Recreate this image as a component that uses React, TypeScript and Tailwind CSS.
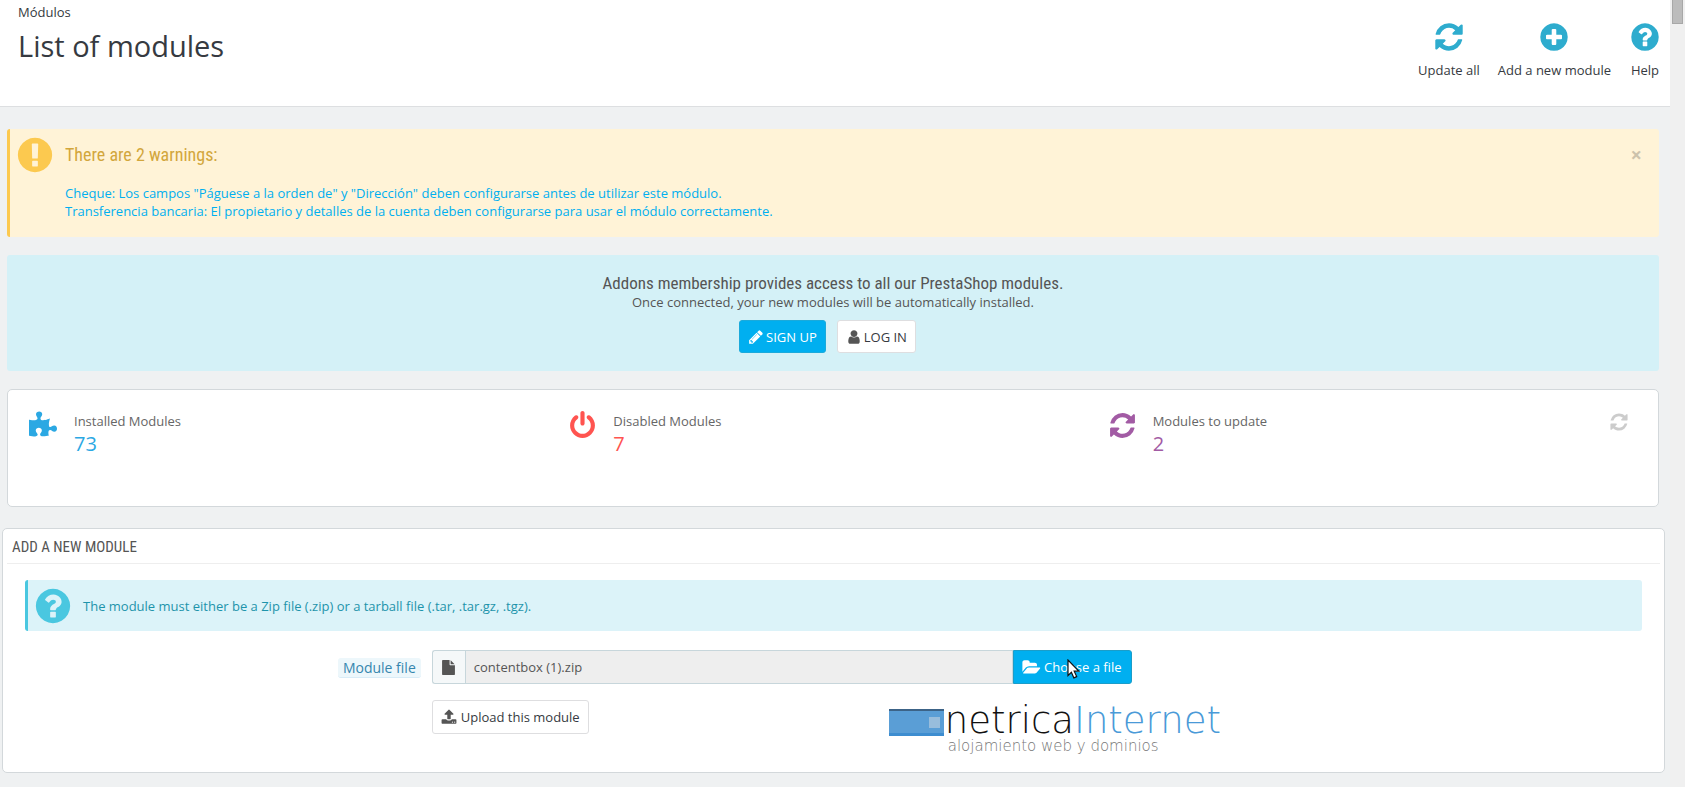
import type { ReactNode } from 'react'
import { FaPuzzlePiece } from 'react-icons/fa'

const circle =
  'q0 209-103 385.5t-279.5 279.5-385.5 103-385.5-103-279.5-279.5-103-385.5 103-385.5 279.5-279.5 385.5-103 385.5 103 279.5 279.5 103 385.5z'

const paths = {
  refresh:
    'M1639 1056q0 5-1 7-64 268-268 434.5t-478 166.5q-146 0-282.5-55t-243.5-157l-129 129q-19 19-45 19t-45-19-19-45v-448q0-26 19-45t45-19h448q26 0 45 19t19 45-19 45l-137 137q71 66 161 102t187 36q134 0 250-65t186-179q11-17 53-117 8-23 30-23h192q13 0 22.5 9.5t9.5 22.5zm25-800v448q0 26-19 45t-45 19h-448q-26 0-45-19t-19-45 19-45l138-138q-148-137-349-137-134 0-250 65t-186 179q-11 17-53 117-8 23-30 23h-199q-13 0-22.5-9.5t-9.5-22.5v-7q65-268 270-434.5t480-166.5q146 0 284 55.5t245 156.5l130-129q19-19 45-19t45 19 19 45z',
  plus:
    'M1344 960v-128q0-26-19-45t-45-19h-256v-256q0-26-19-45t-45-19h-128q-26 0-45 19t-19 45v256h-256q-26 0-45 19t-19 45v128q0 26 19 45t45 19h256v256q0 26 19 45t45 19h128q26 0 45-19t19-45v-256h256q26 0 45-19t19-45zm320-64' + circle,
  question:
    'M1024 1376v-192q0-14-9-23t-23-9h-192q-14 0-23 9t-9 23v192q0 14 9 23t23 9h192q14 0 23-9t9-23zm256-672q0-88-55.5-163t-138.5-116-170-41q-243 0-371 213-15 24 8 42l132 100q7 6 19 6 16 0 25-12 53-68 86-92 34-24 86-24 48 0 85.5 26t37.5 59q0 38-20 61t-68 45q-63 28-115.5 86.5t-52.5 125.5v36q0 14 9 23t23 9h192q14 0 23-9t9-23q0-19 21.5-49.5t54.5-49.5q32-18 49-28.5t46-35 44.5-48 28-60.5 12.5-81zm384 192' + circle,
  exclamation:
    'M896 128q209 0 385.5 103t279.5 279.5 103 385.5-103 385.5-279.5 279.5-385.5 103-385.5-103-279.5-279.5-103-385.5 103-385.5 279.5-279.5 385.5-103zm128 1247v-190q0-14-9-23.5t-22-9.5h-192q-13 0-23 10t-10 23v190q0 13 10 23t23 10h192q13 0 22-9.5t9-23.5zm-2-344l18-621q0-12-10-18-10-8-24-8h-220q-14 0-24 8-10 6-10 18l17 621q0 10 10 17.5t24 7.5h185q14 0 23.5-7.5t10.5-17.5z',
  power:
    'M1664 896q0 156-61 298t-164 245-245 164-298 61-298-61-245-164-164-245-61-298q0-182 80.5-343t226.5-270q43-32 95.5-25t83.5 50q32 42 24.5 94.5t-49.5 84.5q-98 74-151.5 181t-53.5 228q0 104 40.5 198.5t109.5 163.5 163.5 109.5 198.5 40.5 198.5-40.5 163.5-109.5 109.5-163.5 40.5-198.5q0-121-53.5-228t-151.5-181q-42-32-49.5-84.5t24.5-94.5q31-43 84-50t95 25q146 109 226.5 270t80.5 343zm-640-768v640q0 52-38 90t-90 38-90-38-38-90v-640q0-52 38-90t90-38 90 38 38 90z',
  pencil:
    'M491 1536l91-91-235-235-91 91v107h128v128h107zm523-928q0-22-22-22-10 0-17 7l-542 542q-7 7-7 17 0 22 22 22 10 0 17-7l542-542q7-7 7-17zm-54-192l416 416-832 832h-416v-416zm683 96q0 53-37 90l-166 166-416-416 166-165q36-38 90-38 53 0 91 38l235 234q37 39 37 91z',
  user:
    'M1536 1399q0 109-62.5 187t-150.5 78h-854q-88 0-150.5-78t-62.5-187q0-85 8.5-160.5t31.5-152 58.5-131 94-89 134.5-34.5q131 128 313 128t313-128q76 0 134.5 34.5t94 89 58.5 131 31.5 152 8.5 160.5zm-256-887q0 159-112.5 271.5t-271.5 112.5-271.5-112.5-112.5-271.5 112.5-271.5 271.5-112.5 271.5 112.5 112.5 271.5z',
  upload:
    'M1344 1472q0-26-19-45t-45-19-45 19-19 45 19 45 45 19 45-19 19-45zm256 0q0-26-19-45t-45-19-45 19-19 45 19 45 45 19 45-19 19-45zm128-224v320q0 40-28 68t-68 28h-1472q-40 0-68-28t-28-68v-320q0-40 28-68t68-28h427q21 56 70.5 92t110.5 36h256q61 0 110.5-36t70.5-92h427q40 0 68 28t28 68zm-325-648q-17 40-59 40h-256v448q0 26-19 45t-45 19h-256q-26 0-45-19t-19-45v-448h-256q-42 0-59-40-17-39 14-69l448-448q18-19 45-19t45 19l448 448q31 30 14 69z',
  file:
    'M1152 512v-472q22 14 36 28l408 408q14 14 28 36h-472zm-128 32q0 40 28 68t68 28h544v1056q0 40-28 68t-68 28h-1344q-40 0-68-28t-28-68v-1600q0-40 28-68t68-28h800v544z',
  folder:
    'M1815 952q0 31-31 66l-336 396q-43 51-120.5 86.5t-143.5 35.5h-1088q-34 0-60.5-13t-26.5-43q0-31 31-66l336-396q43-51 120.5-86.5t143.5-35.5h1088q34 0 60.5 13t26.5 43zm-343-344v160h-832q-94 0-197 47.5t-164 119.5l-337 396-5 6q0-4-.5-12.5t-.5-12.5v-960q0-92 66-158t158-66h320q92 0 158 66t66 158v32h544q92 0 158 66t66 158z',
}

type IconName = keyof typeof paths

function Icon({ name, className }: { name: IconName; className: string }) {
  return (
    <svg viewBox="0 0 1792 1792" className={`shrink-0 overflow-visible ${className}`} fill="currentColor" aria-hidden="true">
      <path d={paths[name]} />
    </svg>
  )
}

const toolbar: { icon: IconName; label: string }[] = [
  { icon: 'refresh', label: 'Update all' },
  { icon: 'plus', label: 'Add a new module' },
  { icon: 'question', label: 'Help' },
]

function Stat({ icon, label, value, color, children }: {
  icon: ReactNode
  label: string
  value: number
  color: string
  children?: ReactNode
}) {
  return (
    <div className="flex flex-1 items-start">
      <div className={`flex w-[45px] shrink-0 ${color}`}>{icon}</div>
      <div className="flex-1">
        <div className="leading-5 text-[#666]">{label}</div>
        <div className={`text-xl leading-[26px] ${color}`}>{value}</div>
      </div>
      {children}
    </div>
  )
}

export default function App() {
  return (
    <div className="flex min-h-screen bg-[#eff1f2] font-['Open_Sans',sans-serif] text-[13px] leading-[18px] text-[#555]">
      <div className="min-w-0 flex-1">
        {/* Page head */}
        <header className="flex h-[107px] justify-between border-b border-[#dddfe1] bg-white pr-[9px] pl-[18px] text-[#363a41]">
          <div className="pt-[3px]">
            <div>Módulos</div>
            <h1 className="mt-1 text-[29px] leading-[42px]">List of modules</h1>
          </div>
          <nav className="flex gap-[18px] pt-[21px]">
            {toolbar.map((item) => (
              <a key={item.label} href="#" className="flex flex-col items-center">
                <Icon name={item.icon} className="mb-2 size-8 text-[#2eacce]" />
                {item.label}
              </a>
            ))}
          </nav>
        </header>

        <main className="pt-[22px] pb-[14px]">
          <div className="pr-[11px] pl-[7px]">
            {/* Warnings */}
            <div className="mb-[18px] flex items-start rounded-[3px] border-l-3 border-[#fcc94f] bg-[#fff3d7] pt-1.5 pr-[17px] pb-[17px] pl-[5px]">
              <Icon name="exclamation" className="mr-[10px] size-10 text-[#fcc94f]" />
              <div className="flex-1 pt-2">
                <h4 className="mb-[17px] font-['Ubuntu_Condensed','Roboto_Condensed',sans-serif] text-lg leading-6 text-[#d2a63c]">
                  There are 2 warnings:
                </h4>
                <ul className="text-[#00aff0]">
                  <li>
                    <a href="#">Cheque: Los campos "Páguese a la orden de" y "Dirección" deben configurarse antes de utilizar este módulo.</a>
                  </li>
                  <li>
                    <a href="#">Transferencia bancaria: El propietario y detalles de la cuenta deben configurarse para usar el módulo correctamente.</a>
                  </li>
                </ul>
              </div>
              <button type="button" aria-label="Close" className="mt-2.5 text-xl leading-5 font-bold text-[#ccc2ac]">
                ×
              </button>
            </div>

            {/* Addons */}
            <div className="mb-[18px] rounded-[3px] bg-[#d4f1f7] py-[18px] text-center">
              <h4 className="font-['Ubuntu_Condensed','Roboto_Condensed',sans-serif] text-[17px] leading-5">
                Addons membership provides access to all our PrestaShop modules.
              </h4>
              <p className="mb-[9px]">Once connected, your new modules will be automatically installed.</p>
              <div className="flex justify-center">
                <button type="button" className="mr-[11px] flex h-[33px] items-center gap-0.5 rounded-[3px] border border-[#1baadb] bg-[#00aff0] px-2 text-white">
                  <Icon name="pencil" className="size-4" />
                  SIGN UP
                </button>
                <button type="button" className="mr-[11px] flex h-[33px] items-center gap-0.5 rounded-[3px] border border-[#dedee0] bg-white px-2 text-[#363a41]">
                  <Icon name="user" className="size-4 text-[#555]" />
                  LOG IN
                </button>
              </div>
            </div>

            {/* Stats */}
            <div className="mb-[21px] flex h-[118px] rounded-[5px] border border-[#d3d8db] bg-white pt-[21px] pr-[11px] pl-[21px]">
              <Stat icon={<FaPuzzlePiece className="h-[26px] w-7" />} label="Installed Modules" value={73} color="text-[#2ba8e3]" />
              <Stat icon={<Icon name="power" className="size-[29px]" />} label="Disabled Modules" value={7} color="text-[#ff5450]" />
              <Stat icon={<Icon name="refresh" className="size-[29px]" />} label="Modules to update" value={2} color="text-[#a25ba4]">
                <button type="button" aria-label="Refresh" className="mt-px mr-[18px] text-[#ccc]">
                  <Icon name="refresh" className="size-5" />
                </button>
              </Stat>
            </div>
          </div>

          {/* Add a new module */}
          <section className="mr-[5px] ml-[2px] rounded-[5px] border border-[#d3d8db] bg-white px-1 pb-5">
            <h3 className="border-b border-[#eee] px-[5px] pt-1 pb-0.5 font-['Ubuntu_Condensed','Roboto_Condensed',sans-serif] text-[15px] leading-7 uppercase">
              Add a new module
            </h3>
            <div className="px-[18px] pt-4">
              <div className="mb-[19px] flex h-[51px] items-center rounded-[3px] border-l-3 border-[#4ac7e0] bg-[#dcf3f9] pl-[5px] text-[#1e94ab]">
                <Icon name="question" className="mr-[10px] size-10 text-[#4ac7e0]" />
                The module must either be a Zip file (.zip) or a tarball file (.tar, .tar.gz, .tgz).
              </div>
              <form className="-mx-[5px] grid grid-cols-12">
                <div className="col-span-3 flex items-start justify-end px-[6px] pt-2">
                  <label htmlFor="module-file" className="rounded-[3px] border-b border-[#d8ecf7] bg-[#edf7fb] px-[5px] text-sm leading-[19px] text-[#3586ae]">
                    Module file
                  </label>
                </div>
                <div className="col-span-9">
                  <div className="flex h-[34px] w-7/12 pr-[7px] pl-[5px]">
                    <span className="flex w-[33px] shrink-0 items-center justify-center rounded-l-[3px] border border-r-0 border-[#c7d6db] bg-[#f5f8f9]">
                      <Icon name="file" className="size-[15px]" />
                    </span>
                    <input
                      id="module-file"
                      type="text"
                      readOnly
                      defaultValue="contentbox (1).zip"
                      className="min-w-0 flex-1 border border-[#c7d6db] bg-[#eee] px-2 outline-none"
                    />
                    <button type="button" className="relative flex shrink-0 items-center gap-1 rounded-r-[3px] border border-[#1b9dc9] bg-[#00aff0] px-[9px] text-white">
                      <Icon name="folder" className="size-[17px]" />
                      Choose a file
                      <svg viewBox="0 0 13 20" className="absolute top-2 left-[53px] h-5 w-[13px]" aria-hidden="true">
                        <path d="M1 1v15.5l3.4-3.2 2.5 5.6 2.8-1.3-2.5-5.4h4.6z" fill="#fff" stroke="#111" strokeWidth="1.2" />
                      </svg>
                    </button>
                  </div>
                  <div className="mt-4 flex px-[5px]">
                    <div className="w-[457px] shrink-0">
                      <button type="button" className="flex h-[34px] items-center gap-1 rounded-[3px] border border-[#dedee0] bg-white px-2 text-[#363a41]">
                        <Icon name="upload" className="size-4 text-[#555]" />
                        Upload this module
                      </button>
                    </div>
                    <div className="flex items-start font-['DejaVu_Sans_Light','DejaVu_Sans',sans-serif] font-extralight">
                      <div className="mt-[9px] mr-[1px] flex h-[27px] w-[55px] items-center justify-end border-t-2 border-b-3 border-t-[#3c6387] border-b-[#3d8dd0] bg-[#5a9ed6] pr-1">
                        <span className="size-[11px] bg-[#98bddc]" />
                      </div>
                      <div className="pt-0.5">
                        <div className="text-[37px] leading-[38px] text-[#111]">
                          netrica<span className="text-[#4a9ad8]">Internet</span>
                        </div>
                        <div className="pl-[3px] text-[15px] leading-3 text-[#777]">alojamiento web y dominios</div>
                      </div>
                    </div>
                  </div>
                </div>
              </form>
            </div>
          </section>
        </main>
      </div>

      {/* Scroll track */}
      <div className="flex w-[15px] shrink-0 justify-center bg-[#f0f0f0]">
        <div className="h-6 w-[11px] border border-t-0 border-[#a8a8a8] bg-[#bcbcbc]" />
      </div>
    </div>
  )
}
